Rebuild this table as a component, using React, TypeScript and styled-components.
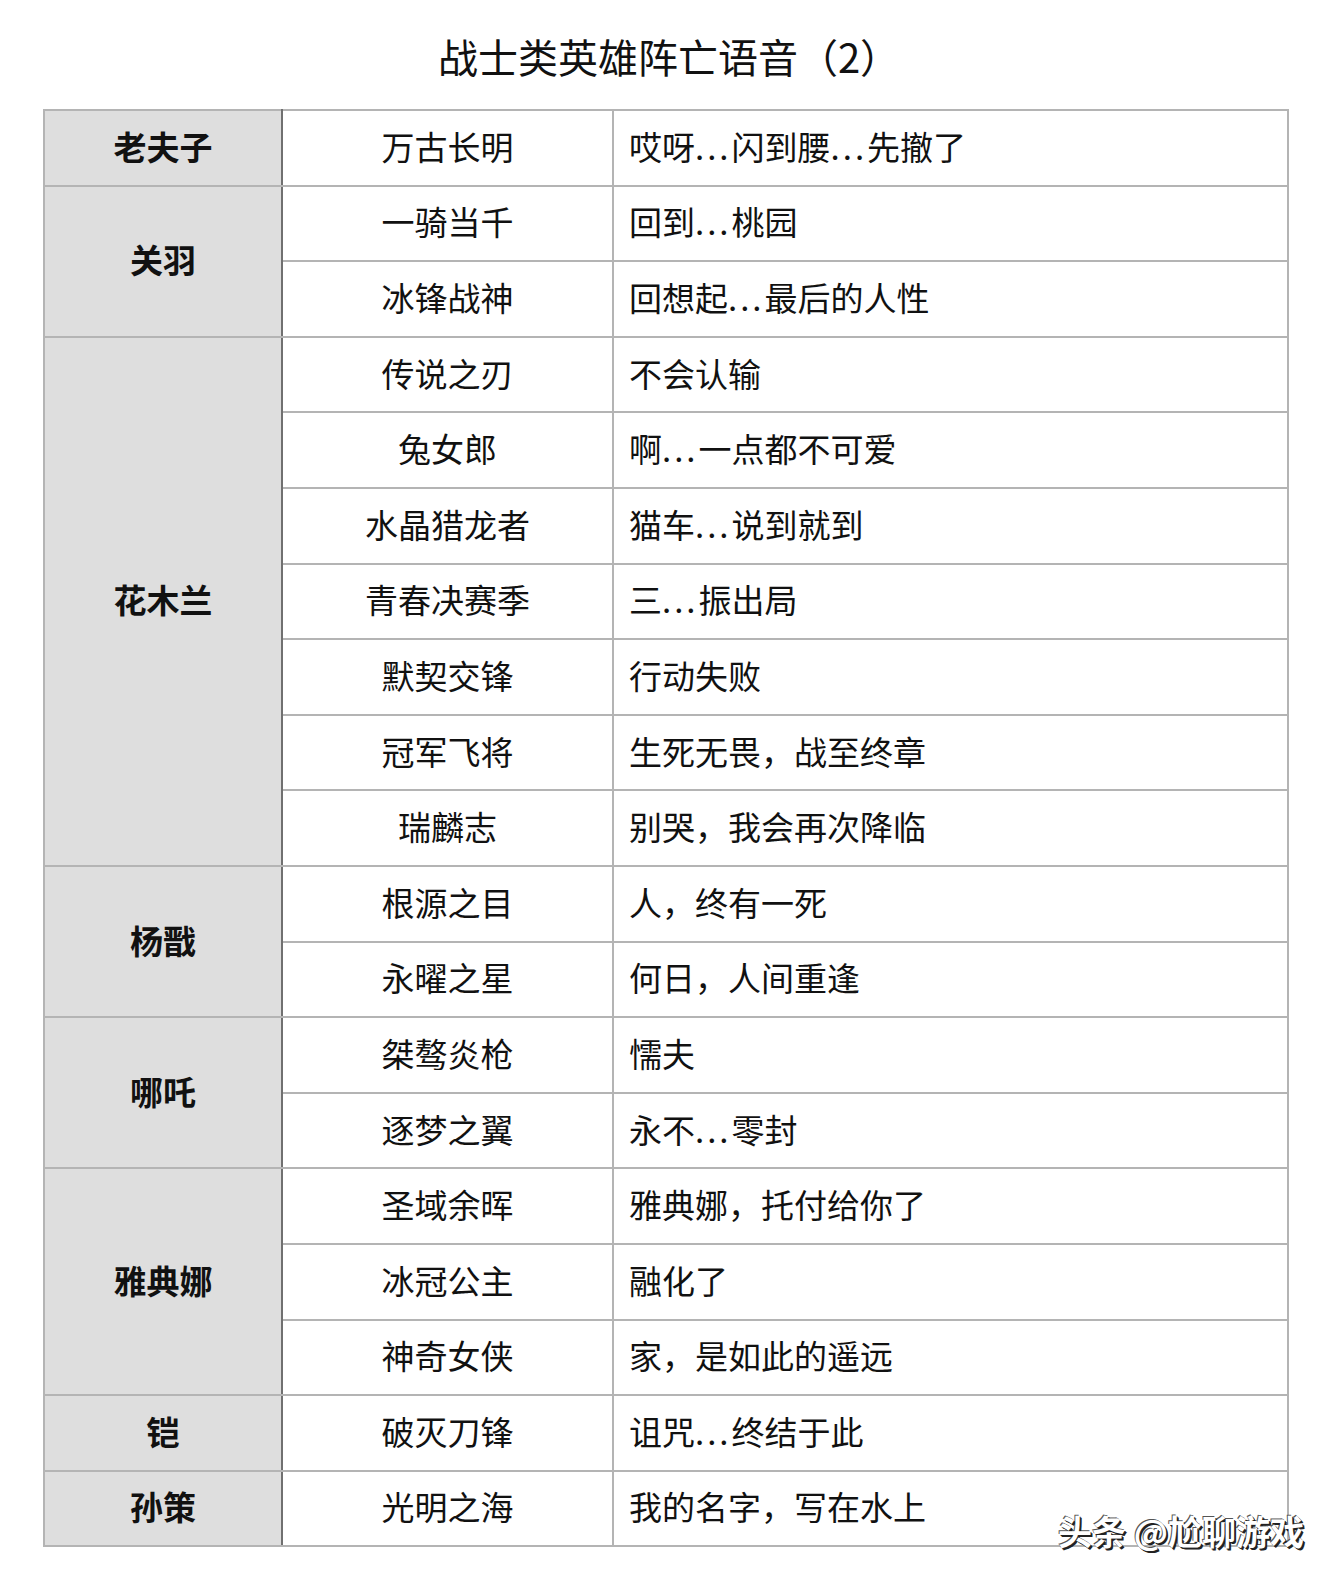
import React from 'react';
import styled, { createGlobalStyle } from 'styled-components';

const GlobalStyle = createGlobalStyle`
    html, body {
        margin: 0;
        padding: 0;
        background: #ffffff;
        overflow: hidden;
    }
    body {
        font-family: "Noto Sans CJK SC", "Noto Sans", sans-serif;
        color: #111111;
    }
`;

const Page = styled.div`
    position: relative;
    width: 1334px;
    height: 1581px;
    box-sizing: border-box;
    padding-left: 43px;
`;

const Title = styled.h1`
    margin: 0;
    width: 1246px;
    height: 109px;
    display: flex;
    align-items: center;
    justify-content: center;
    font-size: 40px;
    font-weight: 400;
    padding: 2px 0 0 6px;
    box-sizing: border-box;
`;

const Table = styled.table`
    width: 1246px;
    border-collapse: collapse;
    table-layout: fixed;
    border: 2px solid #b4b4b4;
`;

const Row = styled.tr`
    height: 75.6px;
`;

const HeroCell = styled.td`
    background: #dedede;
    border: 2px solid #b4b4b4;
    border-right: 2px solid #707070;
    text-align: center;
    font-size: 33px;
    font-weight: 700;
    padding: 0 0 4px;
`;

const SkinCell = styled.td`
    border: 2px solid #b4b4b4;
    text-align: center;
    font-size: 33px;
    padding: 0 0 4px;
`;

const LineCell = styled.td`
    border: 2px solid #b4b4b4;
    text-align: left;
    font-size: 33px;
    padding: 0 0 4px 15px;
`;

const Dots = styled.span`
    letter-spacing: 3px;
`;

const Watermark = styled.div`
    position: absolute;
    left: 1058px;
    top: 1506px;
    font-size: 34px;
    font-weight: 700;
    color: #ffffff;
    text-shadow: 2px 2px 0 #222222, 1px 1px 0 #222222, -1px -1px 0 #555555;
    white-space: nowrap;
`;

interface HeroGroup {
    hero: string;
    skins: [string, string][];
}

const groups: HeroGroup[] = [
    { hero: '老夫子', skins: [['万古长明', '哎呀...闪到腰...先撤了']] },
    { hero: '关羽', skins: [['一骑当千', '回到...桃园'], ['冰锋战神', '回想起...最后的人性']] },
    {
        hero: '花木兰',
        skins: [
            ['传说之刃', '不会认输'],
            ['兔女郎', '啊...一点都不可爱'],
            ['水晶猎龙者', '猫车...说到就到'],
            ['青春决赛季', '三...振出局'],
            ['默契交锋', '行动失败'],
            ['冠军飞将', '生死无畏，战至终章'],
            ['瑞麟志', '别哭，我会再次降临'],
        ],
    },
    { hero: '杨戬', skins: [['根源之目', '人，终有一死'], ['永曜之星', '何日，人间重逢']] },
    { hero: '哪吒', skins: [['桀骜炎枪', '懦夫'], ['逐梦之翼', '永不...零封']] },
    {
        hero: '雅典娜',
        skins: [
            ['圣域余晖', '雅典娜，托付给你了'],
            ['冰冠公主', '融化了'],
            ['神奇女侠', '家，是如此的遥远'],
        ],
    },
    { hero: '铠', skins: [['破灭刀锋', '诅咒...终结于此']] },
    { hero: '孙策', skins: [['光明之海', '我的名字，写在水上']] },
];

function VoiceLine({ text }: { text: string }) {
    const parts = text.split('...');
    return (
        <React.Fragment>
            {parts.map((part, i) => (
                <React.Fragment key={i}>
                    {part}
                    {i < parts.length - 1 && <Dots>...</Dots>}
                </React.Fragment>
            ))}
        </React.Fragment>
    );
}

export default function App() {
    return (
        <React.Fragment>
            <GlobalStyle />
            <Page>
                <Title>战士类英雄阵亡语音（2）</Title>
                <Table>
                    <colgroup>
                        <col style={{ width: 238 }} />
                        <col style={{ width: 331 }} />
                        <col />
                    </colgroup>
                    <tbody>
                        {groups.map((group) =>
                            group.skins.map(([skin, line], index) => (
                                <Row key={group.hero + skin}>
                                    {index === 0 && (
                                        <HeroCell rowSpan={group.skins.length}>{group.hero}</HeroCell>
                                    )}
                                    <SkinCell>{skin}</SkinCell>
                                    <LineCell>
                                        <VoiceLine text={line} />
                                    </LineCell>
                                </Row>
                            ))
                        )}
                    </tbody>
                </Table>
                <Watermark>头条 @尬聊游戏</Watermark>
            </Page>
        </React.Fragment>
    );
}
